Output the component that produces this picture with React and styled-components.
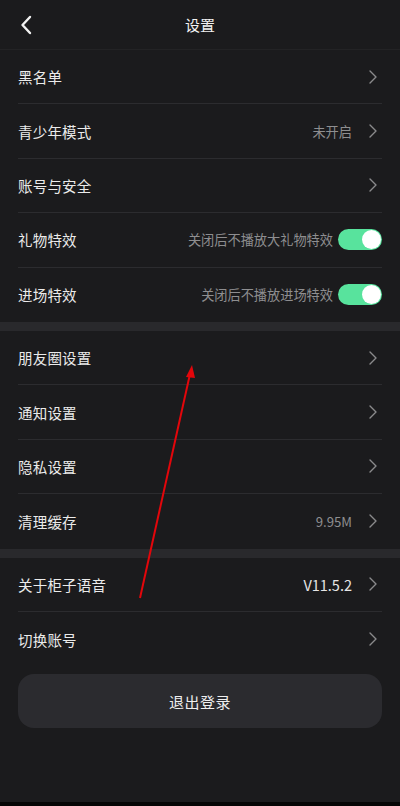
import React from 'react';
import styled, { createGlobalStyle } from 'styled-components';

const GlobalStyle = createGlobalStyle`
  html, body {
    margin: 0;
    padding: 0;
    background: #1b1b1d;
  }
  body {
    font-family: "Noto Sans CJK SC", "Noto Sans", sans-serif;
  }
`;

const Page = styled.div`
  position: relative;
  width: 400px;
  height: 806px;
  background: #1b1b1d;
  color: #ececec;
  display: flex;
  flex-direction: column;
  overflow: hidden;
`;

const Header = styled.header`
  height: 49px;
  display: flex;
  align-items: center;
  justify-content: center;
  position: relative;
  border-bottom: 1px solid #232325;
`;

const BackButton = styled.div`
  position: absolute;
  left: 16px;
  top: 14px;
  width: 20px;
  height: 22px;
  display: flex;
  align-items: center;
  justify-content: center;
`;

const Title = styled.h1`
  margin: 0;
  font-size: 15px;
  font-weight: 400;
  color: #f2f2f2;
`;

const Section = styled.section`
  display: flex;
  flex-direction: column;
`;

const Gap = styled.div`
  height: 9px;
  background: #29292c;
`;

const Row = styled.div`
  height: 54.4px;
  margin: 0 18px;
  display: flex;
  align-items: center;
  justify-content: space-between;
  border-bottom: ${p => (p.$last ? 'none' : '1px solid #2c2c2f')};
  box-sizing: border-box;
`;

const Label = styled.span`
  font-size: 14.5px;
  color: #ebebeb;
  letter-spacing: 0.2px;
`;

const Right = styled.div`
  display: flex;
  align-items: center;
  gap: 5px;
`;

const Hint = styled.span`
  color: ${p => (p.$bright ? '#e6e6e6' : '#8e8e90')};
  font-size: ${p => (p.$bright ? '14.5px' : '13.2px')};
`;

const Chevron = styled.svg`
  width: 12px;
  height: 16px;
  margin: 0 3px 0 10px;
`;

const Toggle = styled.div`
  width: 44px;
  height: 21px;
  border-radius: 11px;
  background: #58e39d;
  display: flex;
  align-items: center;
  justify-content: flex-end;
  padding: 0 1px;
  box-sizing: border-box;
`;

const Knob = styled.div`
  width: 19px;
  height: 19px;
  border-radius: 50%;
  background: #ffffff;
`;

const LogoutButton = styled.button`
  margin: 8px 18px 0;
  height: 54px;
  border: none;
  border-radius: 16px;
  background: #2b2b2f;
  color: #efefef;
  font-family: inherit;
  font-size: 15px;
  letter-spacing: 0.5px;
`;

const Spacer = styled.div`
  flex: 1;
`;

const BottomBar = styled.div`
  height: 4px;
  background: #050505;
`;

const ArrowOverlay = styled.svg`
  position: absolute;
  left: 0;
  top: 0;
  width: 400px;
  height: 806px;
  pointer-events: none;
`;

const Arrow = () => (
  <Chevron viewBox="0 0 12 16">
    <path d="M3 2 L9 8 L3 14" fill="none" stroke="#8a8a8c" strokeWidth="1.4" strokeLinecap="round" strokeLinejoin="round" />
  </Chevron>
);

const Switch = () => (
  <Toggle>
    <Knob />
  </Toggle>
);

const SettingRow = ({ label, hint, bright, toggle, last }) => (
  <Row $last={last}>
    <Label>{label}</Label>
    <Right>
      {hint && <Hint $bright={bright}>{hint}</Hint>}
      {toggle ? <Switch /> : <Arrow />}
    </Right>
  </Row>
);

export default function App() {
  return (
    <>
      <GlobalStyle />
      <Page>
        <Header>
          <BackButton>
            <svg width="12" height="20" viewBox="0 0 12 20">
              <path d="M10 2 L2.5 10 L10 18" fill="none" stroke="#f2f2f2" strokeWidth="2.4" strokeLinecap="round" strokeLinejoin="round" />
            </svg>
          </BackButton>
          <Title>设置</Title>
        </Header>

        <Section>
          <SettingRow label="黑名单" />
          <SettingRow label="青少年模式" hint="未开启" />
          <SettingRow label="账号与安全" />
          <SettingRow label="礼物特效" hint="关闭后不播放大礼物特效" toggle />
          <SettingRow label="进场特效" hint="关闭后不播放进场特效" toggle last />
        </Section>
        <Gap />
        <Section>
          <SettingRow label="朋友圈设置" />
          <SettingRow label="通知设置" />
          <SettingRow label="隐私设置" />
          <SettingRow label="清理缓存" hint="9.95M" last />
        </Section>
        <Gap />
        <Section>
          <SettingRow label="关于柜子语音" hint="V11.5.2" bright />
          <SettingRow label="切换账号" last />
        </Section>

        <LogoutButton>退出登录</LogoutButton>
        <Spacer />
        <BottomBar />

        <ArrowOverlay viewBox="0 0 400 806">
          <line x1="140" y1="598" x2="190" y2="374" stroke="#e3060b" strokeWidth="2" />
          <polygon points="192,365 186,377 195,378" fill="#e3060b" />
        </ArrowOverlay>
      </Page>
    </>
  );
}
